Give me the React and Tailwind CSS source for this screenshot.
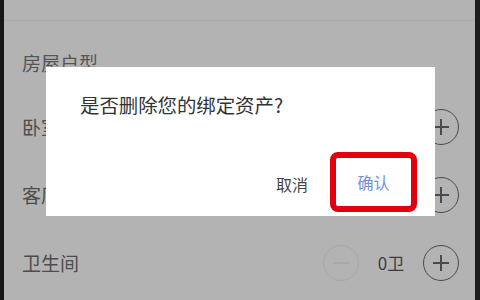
import React from 'react';

const font = { fontFamily: '"Noto Sans CJK SC", "Noto Sans", sans-serif' };

function Circle({ minus, faded }) {
    const tone = faded ? 'border-[#a8a8a8]' : 'border-[#4a4a4a]';
    const bar = faded ? 'bg-[#a8a8a8]' : 'bg-[#4a4a4a]';
    return (
        <div className={`relative w-[36px] h-[36px] rounded-full border-[1.5px] ${tone} flex items-center justify-center`}>
            <div className={`w-[16px] h-[1.5px] ${bar}`} />
            {!minus && <div className={`absolute w-[1.5px] h-[16px] ${bar}`} />}
        </div>
    );
}

function CountRow({ label, unit }) {
    return (
        <div className="h-[68px] flex items-center pl-[18px] pr-[16px]">
            <span className="flex-1 text-[19px] leading-[20px] text-[#4d4d4d]">{label}</span>
            <Circle minus faded />
            <span className="w-[64px] text-center text-[17px] text-[#3d3d3d]">0{unit}</span>
            <Circle />
        </div>
    );
}

export default function App() {
    return (
        <div className="relative w-[480px] h-[300px] overflow-hidden bg-[#b3b3b3] flex" style={font}>
            <div className="w-[4px] bg-[#161616]" />
            <div className="flex-1 flex flex-col">
                <div className="h-[21px] border-b border-[#aaaaaa]" />
                {/* Header */}
                <div className="h-[72px] pt-[12px] pl-[18px] flex items-center">
                    <span className="text-[19px] leading-[20px] text-[#555]">房屋户型</span>
                </div>
                <CountRow label="卧室" unit="室" />
                <CountRow label="客厅" unit="厅" />
                <CountRow label="卫生间" unit="卫" />
            </div>
            <div className="w-[5px] bg-[#1c1c1c]" />

            {/* Confirm dialog */}
            <div className="absolute left-[46px] top-[67px] w-[389px] h-[149px] bg-white flex flex-col">
                <div className="pt-[28px] pl-[34px] text-[19.4px] leading-[20px] text-[#333]">
                    是否删除您的绑定资产?
                </div>
                <div className="flex-1 flex items-end justify-end pb-[4px] pr-[18px]">
                    <span className="mb-[20px] mr-[22px] text-[16px] leading-[16px] text-[#444]">取消</span>
                    <div className="w-[87px] h-[60px] rounded-[8px] border-[6px] border-[#e0000f] bg-white flex items-center justify-center">
                        <span className="text-[16px] leading-[16px] text-[#6d90d8]">确认</span>
                    </div>
                </div>
            </div>
        </div>
    );
}
